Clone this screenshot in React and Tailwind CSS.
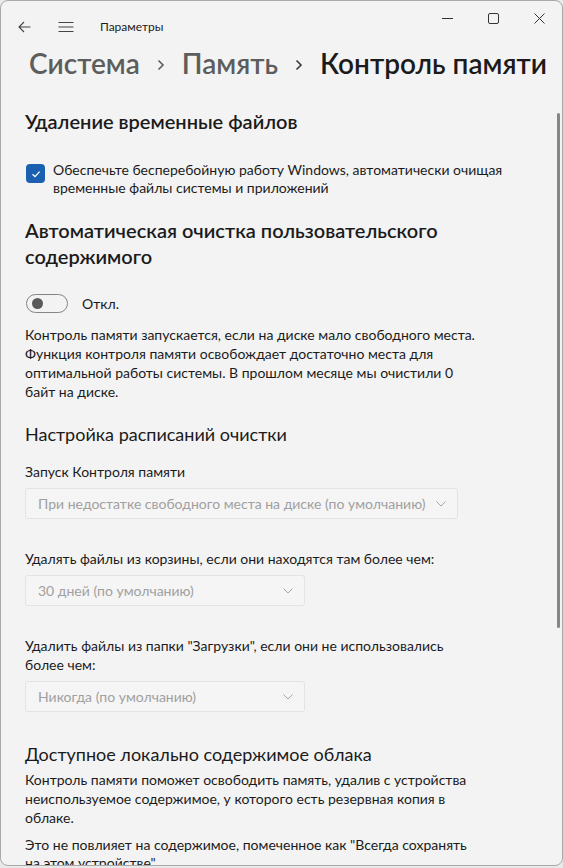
import React from "react";

const font = { fontFamily: 'Lato, "Noto Sans", sans-serif' };

function Chevron() {
  return (
    <svg width="10" height="6" viewBox="0 0 10 6" className="shrink-0">
      <path d="M0.5 0.5 L5 5 L9.5 0.5" fill="none" stroke="#a6a6a6" strokeWidth="1" />
    </svg>
  );
}

function Dropdown({ text, w }) {
  return (
    <div className={`flex h-[31px] items-center justify-between rounded-[3px] border border-[#e3e3e3] bg-[#f5f5f5] pl-[12px] pr-[11px] ${w}`}>
      <span className="whitespace-nowrap text-[14px] text-[#a0a0a0]">{text}</span>
      <Chevron />
    </div>
  );
}

function Lines({ lines, className }) {
  return (
    <div className={className}>
      {lines.map((l, i) => (
        <div key={i} className="whitespace-nowrap">{l}</div>
      ))}
    </div>
  );
}

function BcChevron({ color }) {
  return (
    <svg width="8" height="12" viewBox="0 0 8 12" className="mt-[3px] shrink-0">
      <path d="M1.5 1.5 L6 6 L1.5 10.5" fill="none" stroke={color} strokeWidth="1.6" />
    </svg>
  );
}

export default function App() {
  return (
    <div className="h-[868px] w-[563px] bg-[#e9e9e9]" style={font}>
      <div className="relative flex h-[866px] w-[563px] flex-col overflow-hidden rounded-[8px] border border-[#a9a9a9] bg-[#f3f3f3] text-[#1b1b1b]">
        {/* Title bar */}
        <div className="flex h-[42px] shrink-0 items-start">
          <div className="flex h-[50px] items-center pl-[17px] pt-[1px]">
            <svg width="13" height="12" viewBox="0 0 13 12">
              <path d="M12.5 6 H1 M6 1 L1 6 L6 11" fill="none" stroke="#454545" strokeWidth="1.1" />
            </svg>
            <svg width="16" height="12" viewBox="0 0 16 12" className="ml-[27px]">
              <path d="M0.5 1.5 H15.5 M0.5 6 H15.5 M0.5 10.5 H15.5" fill="none" stroke="#454545" strokeWidth="1.1" />
            </svg>
            <span className="ml-[26px] text-[12px] text-[#1b1b1b]">Параметры</span>
          </div>
          <div className="ml-auto flex h-[34px] items-center">
            <div className="flex w-[46px] justify-center">
              <svg width="11" height="10" viewBox="0 0 11 10"><path d="M0 5.5 H11" stroke="#333" strokeWidth="1" /></svg>
            </div>
            <div className="flex w-[46px] justify-center">
              <svg width="11" height="11" viewBox="0 0 11 11"><rect x="0.5" y="0.5" width="10" height="10" rx="1.5" fill="none" stroke="#333" strokeWidth="1" /></svg>
            </div>
            <div className="flex w-[46px] justify-center">
              <svg width="11" height="11" viewBox="0 0 11 11"><path d="M0.5 0.5 L10.5 10.5 M10.5 0.5 L0.5 10.5" stroke="#333" strokeWidth="1" /></svg>
            </div>
          </div>
        </div>

        {/* Breadcrumb */}
        <div className="flex h-[40px] shrink-0 items-center whitespace-nowrap pl-[28px] text-[28px] font-semibold">
          <span className="text-[#5d5d5d]">Система</span>
          <div className="mx-[17px]"><BcChevron color="#5d5d5d" /></div>
          <span className="text-[#5d5d5d]">Память</span>
          <div className="mx-[17px]"><BcChevron color="#3a3a3a" /></div>
          <span className="text-[#1b1b1b]">Контроль памяти</span>
        </div>

        {/* Scroll content */}
        <div className="relative flex-1 overflow-hidden">
          <div className="absolute left-[556px] top-[30px] h-[515px] w-[3px] rounded-full bg-[#868686]" />
          <div className="flex flex-col pl-[24px] pt-[24px]">
            <h2 className="whitespace-nowrap text-[20px] font-semibold leading-[28px]">Удаление временные файлов</h2>

            <div className="mt-[26px] flex items-start">
              <div className="ml-[1px] mt-[3px] flex h-[19px] w-[19px] shrink-0 items-center justify-center rounded-[4px] bg-[#1a5fb0]">
                <svg width="12" height="12" viewBox="0 0 12 12"><path d="M2.5 6.3 L5 8.6 L9.6 3.6" fill="none" stroke="#fff" strokeWidth="1.3" /></svg>
              </div>
              <Lines
                className="ml-[8px] text-[14px] leading-[18px] text-[#1b1b1b]"
                lines={[
                  "Обеспечьте бесперебойную работу Windows, автоматически очищая",
                  "временные файлы системы и приложений",
                ]}
              />
            </div>

            <Lines
              className="mt-[20px] text-[20px] font-semibold leading-[26px]"
              lines={["Автоматическая очистка пользовательского", "содержимого"]}
            />

            <div className="mt-[24px] flex items-center">
              <div className="ml-[1px] flex h-[19px] w-[42px] items-center rounded-full border border-[#858585] pl-[5px]">
                <div className="h-[11px] w-[11px] rounded-full bg-[#5a5a5a]" />
              </div>
              <span className="ml-[14px] text-[14px]">Откл.</span>
            </div>

            <Lines
              className="mt-[11px] text-[14px] leading-[19px]"
              lines={[
                "Контроль памяти запускается, если на диске мало свободного места.",
                "Функция контроля памяти освобождает достаточно места для",
                "оптимальной работы системы. В прошлом месяце мы очистили 0",
                "байт на диске.",
              ]}
            />

            <h3 className="mt-[20px] whitespace-nowrap text-[18px] leading-[26px]">Настройка расписаний очистки</h3>

            <p className="mt-[15px] whitespace-nowrap text-[14px] leading-[19px]">Запуск Контроля памяти</p>
            <div className="mt-[7px]">
              <Dropdown text="При недостатке свободного места на диске (по умолчанию)" w="w-[433px]" />
            </div>

            <p className="mt-[30px] whitespace-nowrap text-[14px] leading-[19px]">Удалять файлы из корзины, если они находятся там более чем:</p>
            <div className="mt-[7px]">
              <Dropdown text="30 дней (по умолчанию)" w="w-[280px]" />
            </div>

            <Lines
              className="mt-[30px] text-[14px] leading-[19px]"
              lines={['Удалить файлы из папки "Загрузки", если они не использовались', "более чем:"]}
            />
            <div className="mt-[7px]">
              <Dropdown text="Никогда (по умолчанию)" w="w-[280px]" />
            </div>

            <h3 className="mt-[29px] whitespace-nowrap text-[18px] leading-[26px]">Доступное локально содержимое облака</h3>
            <Lines
              className="mt-[3px] text-[14px] leading-[19px]"
              lines={[
                "Контроль памяти поможет освободить память, удалив с устройства",
                "неиспользуемое содержимое, у которого есть резервная копия в",
                "облаке.",
              ]}
            />
            <Lines
              className="mt-[9px] text-[14px] leading-[18px]"
              lines={['Это не повлияет на содержимое, помеченное как "Всегда сохранять', 'на этом устройстве".']}
            />
          </div>
        </div>
      </div>
    </div>
  );
}
